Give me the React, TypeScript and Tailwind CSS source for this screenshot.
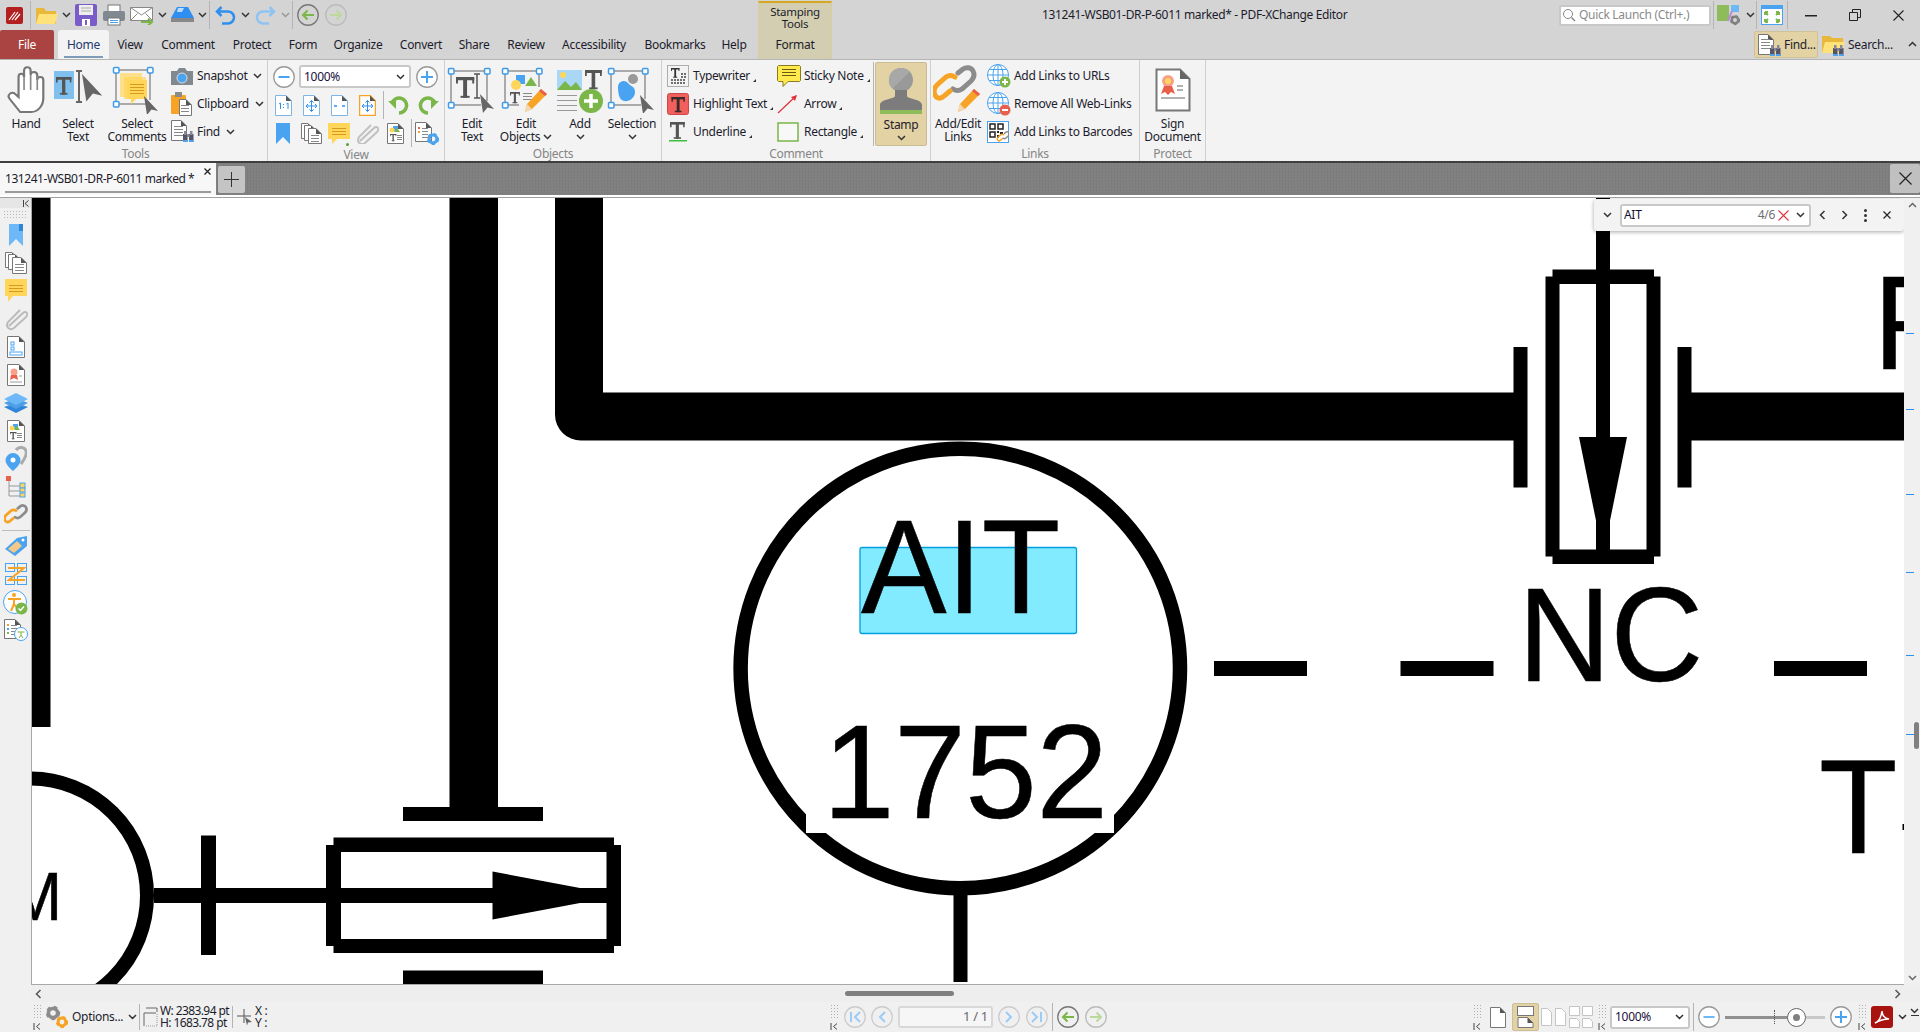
import type { ReactNode } from "react";

const S = ({ w, h, children }: { w: number; h: number; children: ReactNode }) => (
  <svg width={w} height={h} viewBox={`0 0 ${w} ${h}`} fill="none" className="block shrink-0">
    {children}
  </svg>
);

const Chev = ({ up, color = "#333" }: { up?: boolean; color?: string }) => (
  <S w={9} h={6}>
    <path d={up ? "M1 5l3.5-3.5L8 5" : "M1 1l3.5 3.5L8 1"} stroke={color} strokeWidth="1.5" />
  </S>
);

const Corner = () => (
  <svg width="3" height="3" viewBox="0 0 3 3" className="ml-[3px] mt-[9px] shrink-0">
    <path d="M3 0v3H0z" fill="#333" />
  </svg>
);

const Handle = ({ x, y }: { x: number; y: number }) => (
  <rect x={x - 2.5} y={y - 2.5} width="5.5" height="5.5" rx="1" fill="#fff" stroke="#3d9be9" strokeWidth="1.5" />
);

const Cursor = ({ x, y, s = 1 }: { x: number; y: number; s?: number }) => (
  <path transform={`translate(${x} ${y}) scale(${s})`} d="M0 0L14 15 7.5 13.5 3 19z" fill="#666" />
);

const Page = ({ w, h, x = 0, y = 0 }: { w: number; h: number; x?: number; y?: number }) => (
  <g transform={`translate(${x} ${y})`}>
    <path d={`M.5.5H${w - 6}L${w - .5} 6V${h - .5}H.5z`} fill="#fff" stroke="#777" />
    <path d={`M${w - 6} .5L${w - .5} 6H${w - 6}z`} fill="#555" />
  </g>
);

const TBar = ({ x, y, s = 1, c = "#555" }: { x: number; y: number; s?: number; c?: string }) => (
  <g transform={`translate(${x} ${y}) scale(${s})`} fill={c}>
    <rect width="14" height="2.5" />
    <rect x="5.5" width="3" height="16" />
    <rect x="3.5" y="14.5" width="7" height="1.5" />
    <rect y="0" width="1.5" height="5" />
    <rect x="12.5" y="0" width="1.5" height="5" />
  </g>
);

const Lines = ({ x, y, w, n, gap = 3, c = "#888" }: { x: number; y: number; w: number; n: number; gap?: number; c?: string }) => (
  <g fill={c}>
    {Array.from({ length: n }, (_, i) => (
      <rect key={i} x={x} y={y + i * gap} width={w} height="1" />
    ))}
  </g>
);

const Bubble = ({ x, y, w, h, fill = "#ffd659", n = 3 }: { x: number; y: number; w: number; h: number; fill?: string; n?: number }) => (
  <g>
    <path d={`M${x} ${y}h${w}v${h}h${-w + 9}l-5 5v-5h-4z`} fill={fill} />
    <Lines x={x + 3} y={y + 4} w={w - 6} n={n} gap={3} c="#d99a1c" />
  </g>
);

const Binoc = ({ x, y }: { x: number; y: number }) => (
  <g transform={`translate(${x} ${y})`}>
    <rect x="0" y="3" width="4.5" height="8" fill="#556" />
    <rect x="6" y="3" width="4.5" height="8" fill="#556" />
    <rect x="1" y="0" width="2.5" height="4" fill="#889" />
    <rect x="7" y="0" width="2.5" height="4" fill="#889" />
    <rect x="0" y="9" width="4.5" height="2" fill="#4aa3f0" />
    <rect x="6" y="9" width="4.5" height="2" fill="#4aa3f0" />
    <rect x="4" y="3" width="2.5" height="3" fill="#889" />
  </g>
);

const Gear = ({ x, y, r, c }: { x: number; y: number; r: number; c: string }) => (
  <g>
    <circle cx={x} cy={y} r={r * 0.65} stroke={c} strokeWidth={r * 0.5} />
    <circle cx={x} cy={y} r={r * 0.85} stroke={c} strokeWidth={r * 0.35} strokeDasharray={`${r * 0.5} ${r * 0.5}`} />
  </g>
);

const Globe = ({ badge }: { badge: string }) => (
  <S w={24} h={24}>
    <g stroke="#4aa3f0">
      <circle cx="11" cy="11" r="10.5" fill="#fff" />
      <ellipse cx="11" cy="11" rx="5" ry="10.5" />
      <path d="M11 .5v21M.5 11h21M2 5.5h18M2 16.5h18" />
    </g>
    <circle cx="18" cy="18" r="5.5" fill={badge} />
    <rect x="15" y="17" width="6" height="2" fill="#fff" />
    {badge === "#7ab648" && <rect x="17" y="15" width="2" height="6" fill="#fff" />}
  </S>
);

const Pencil = ({ x, y, s = 1 }: { x: number; y: number; s?: number }) => (
  <g transform={`translate(${x} ${y}) scale(${s})`}>
    <path d="M16 0l6 5L7 20 0 23l2-8z" fill="#f7a325" />
    <path d="M16 0l6 5-2 2-6-5z" fill="#e8604c" />
    <path d="M2 15l5 5-7 3z" fill="#f3d9b0" />
  </g>
);

const ChainLink = ({ s = 1 }: { s?: number }) => (
  <g transform={`scale(${s})`} strokeWidth="5" strokeLinecap="round">
    <path d="M25 8l5-4c3-2 8-2 10 2s1 7-2 10l-9 8c-3 2-6 2-9 0" stroke="#8c8c8c" />
    <path d="M17 26l-6 5c-3 3-7 3-9-1s-1-7 2-10l9-8c3-2 6-2 9 0" stroke="#f7a325" />
  </g>
);

const HandIcon = () => (
  <S w={38} h={48}>
    <g transform="scale(1.1 1)">
      <path
        d="M12 46L2.5 33c-3-4 1.500-8 5-5l3 3V11c0-4.500 5-4.500 5 0V5c0-5 6-5 6 0v4c0-4 6-4 6 .5V14c0-4 5.500-4 5.500 0V32c0 8-5 14-11 14z"
        fill="#fff"
        stroke="#777"
        strokeWidth="2"
      />
      <path d="M15.500 11v13M21.500 9v15M27.500 10v14" stroke="#888" strokeWidth="1.500" />
    </g>
  </S>
);

const SelectTextIcon = () => (
  <S w={50} h={40}>
    <rect x="1" y="1" width="20" height="28" fill="#80c0ee" />
    <TBar x={3} y={7} s={1.1} />
    <path d="M23 1h6M26 1v31M23 32h6" stroke="#666" strokeWidth="2" />
    <Cursor x={29} y={4} s={1.45} />
  </S>
);

const SelectCommentsIcon = () => (
  <S w={50} h={48}>
    <path d="M4 4h34M4 4v34" stroke="#aaa" strokeWidth="2" />
    <path d="M38 4v30M4 38h30" stroke="#aaa" strokeWidth="2" />
    <rect x="8" y="7" width="22" height="24" fill="#ffe08a" />
    <rect x="12" y="11" width="22" height="22" fill="#ffd659" opacity=".7" />
    <Bubble x={15} y={14} w={20} h={19} n={4} />
    <Handle x={4} y={4} />
    <Handle x={38} y={4} />
    <Handle x={4} y={38} />
    <Cursor x={32} y={30} s={1} />
  </S>
);

const EditTextIcon = () => (
  <S w={50} h={46}>
    <path d="M4 4h36v30M4 4v34h30" stroke="#aaa" strokeWidth="2" />
    <Handle x={4} y={4} />
    <Handle x={40} y={4} />
    <Handle x={4} y={38} />
    <TBar x={9} y={10} s={1.3} />
    <path d="M27 7h6M30 7v24M27 31h6" stroke="#555" strokeWidth="1.500" />
    <Cursor x={33} y={27} s={1} />
  </S>
);

const EditObjectsIcon = () => (
  <S w={50} h={46}>
    <path d="M4 4h34v16M4 4v34h14" stroke="#aaa" strokeWidth="2" />
    <Handle x={4} y={4} />
    <Handle x={38} y={4} />
    <Handle x={4} y={38} />
    <rect x="15" y="8" width="9" height="9" fill="#4aa3f0" />
    <circle cx="15" cy="18" r="5" fill="#ffd659" />
    <path d="M24 19l6-9 6 9z" fill="#7ab648" />
    <TBar x={9} y={25} s={.7} />
    <Lines x={22} y={26} w={9} n={3} gap={3} />
    <Pencil x={24} y={22} />
  </S>
);

const AddIcon = () => (
  <S w={48} h={46}>
    <rect x="1" y="3" width="25" height="20" fill="#a8d8f5" />
    <path d="M1 23l8-9 6 6 5-5 6 8z" fill="#7ab648" />
    <circle cx="7" cy="8" r="3" fill="#ffd659" />
    <TBar x={29} y={3} s={1.2} />
    <Lines x={1} y={28} w={20} n={4} gap={5} c="#999" />
    <circle cx="35" cy="34" r="12" fill="#7ab648" />
    <path d="M28 34h14M35 27v14" stroke="#fff" strokeWidth="3.500" />
  </S>
);

const SelectionIcon = () => (
  <S w={50} h={46}>
    <path d="M4 4h34v28M4 4v34h30" stroke="#aaa" strokeWidth="2" />
    <Handle x={4} y={4} />
    <Handle x={38} y={4} />
    <Handle x={4} y={38} />
    <circle cx="26" cy="12" r="5" fill="#999" />
    <path d="M11 20c0-6 7-8 10-4s7 3 7 9-6 10-11 9-6-8-6-14z" fill="#4aa3f0" />
    <Cursor x={33} y={28} s={1} />
  </S>
);

const StampIcon = () => (
  <S w={42} h={46}>
    <circle cx="21" cy="12" r="12" fill="#999" />
    <path d="M21 0a12 12 0 0 0-8.500 20.500L30 3.500A12 12 0 0 0 21 0z" fill="#a8a8a8" />
    <path d="M15 22h12v6c0 3 15 3 15 9v5H0v-5c0-6 15-6 15-9z" fill="#7c7c7c" />
    <rect x="0" y="42" width="42" height="4" fill="#8fbc5a" />
  </S>
);

const AddLinksIcon = () => (
  <S w={50} h={50}>
    <ChainLink s={1} />
    <Pencil x={25} y={24} />
  </S>
);

const SignIcon = () => (
  <S w={36} h={44}>
    <path d="M1.500 1.500H25L34.500 11v31.500H1.500z" fill="#fff" stroke="#777" strokeWidth="2" rx="2" />
    <path d="M25 1.500L34.500 11H25z" fill="#666" />
    <circle cx="13" cy="13" r="6" fill="#f7a08c" />
    <circle cx="13" cy="13" r="3" fill="#ffd659" />
    <path d="M9 18l-3 8 4-2 3 3 3-3 4 2-3-8z" fill="#e8604c" />
    <path d="M22 18h6M22 22h6M6 30h24" stroke="#999" strokeWidth="1.500" />
  </S>
);

const Circle = ({ size = 22, line = "#999", fill = "#fff", children }: { size?: number; line?: string; fill?: string; children?: ReactNode }) => (
  <S w={size} h={size}>
    <circle cx={size / 2} cy={size / 2} r={size / 2 - 0.75} fill={fill} stroke={line} strokeWidth="1.300" />
    {children}
  </S>
);

const ArrowCircle = ({ dir, muted }: { dir: "l" | "r"; muted?: boolean }) => (
  <Circle line={muted ? "#bbb" : "#777"} fill="none">
    <path
      d={dir === "l" ? "M17 11H6M10.500 6.500L6 11l4.500 4.500" : "M5 11h11M11.500 6.500L16 11l-4.500 4.500"}
      stroke={muted ? "#bcd99c" : "#7ab648"}
      strokeWidth="2"
    />
  </Circle>
);

const NavCircle = ({ d }: { d: string }) => (
  <Circle line="#ccc" fill="none">
    <path d={d} stroke="#9ccbf5" strokeWidth="2" />
  </Circle>
);

const Sep = ({ className }: { className: string }) => <div className={`w-px shrink-0 bg-[#b4b4b4] ${className}`} />;

const Big = ({ className, icon, lines, chev }: { className: string; icon: ReactNode; lines: string[]; chev?: "inline" | "below" }) => (
  <div className={`flex flex-col items-center shrink-0 ${className}`}>
    <div className="h-[55px] flex items-center justify-center">{icon}</div>
    {lines.map((l, i) => (
      <div key={l} className="leading-[13px] h-[13px] flex items-center gap-[3px] whitespace-nowrap">
        {l}
        {chev === "inline" && i === lines.length - 1 && <Chev />}
      </div>
    ))}
    {chev === "below" && (
      <div className="h-[13px] flex items-center">
        <Chev />
      </div>
    )}
  </div>
);

const Small = ({ icon, label, box, chev, corner, chevGap }: { icon: ReactNode; label: string; box: string; chev?: boolean; corner?: boolean; chevGap?: string }) => (
  <div className="h-[28px] flex items-center whitespace-nowrap">
    <div className={`${box} shrink-0 flex items-center`}>{icon}</div>
    {label}
    {corner && <Corner />}
    {chev && (
      <div className={chevGap}>
        <Chev />
      </div>
    )}
  </div>
);

const Group = ({ label, className, children }: { label: string; className: string; children: ReactNode }) => (
  <div className={`shrink-0 h-full border-r border-[#cfcfcf] flex flex-col pt-[2px] ${className}`}>
    <div className="h-[85px] flex">{children}</div>
    <div className="mt-[1px] h-[14px] leading-[14px] text-center text-[#858585]">{label}</div>
  </div>
);

const Tab = ({ className, label }: { className: string; label: string }) => (
  <div className={`shrink-0 text-center leading-[30px] ${className}`}>{label}</div>
);

const Grip = () => (
  <div className="w-[10px] h-[26px] shrink-0 flex flex-col justify-between">
    <div className="h-[15px] bg-[radial-gradient(#b0b0b0_1px,transparent_1px)] bg-[length:3px_3px]" />
    <S w={8} h={7}>
      <path d="M1 0v7M7 .5L3.500 3.500 7 6.500" stroke="#444" />
    </S>
  </div>
);

const Combo = ({ className, text }: { className: string; text: string }) => (
  <div className={`shrink-0 h-[23px] bg-white border-2 border-[#c8c8c8] rounded-[3px] flex items-center justify-between pl-[3px] pr-[4px] ${className}`}>
    <span className="text-[#1a1040]">{text}</span>
    <Chev />
  </div>
);

const SideIcons: [string, ReactNode][] = [
  ["bookmark", <S w={14} h={22} key="a"><path d="M0 0h14v22L7 15 0 22z" fill="#6db8f7" /><rect x="10" y="0" width="4" height="7" fill="#2f86d8" /></S>],
  ["pages", <S w={22} h={22} key="b"><Page w={13} h={16} /><Page w={13} h={16} x={3} y={2} /><Page w={15} h={17} x={7} y={5} /><Lines x={10} y={12} w={9} n={3} /></S>],
  ["comments", <S w={24} h={24} key="c"><path d="M1 0h22v17H9l-5 6v-6H1z" fill="#ffd659" /><Lines x={5} y={6} w={14} n={3} c="#d99a1c" /></S>],
  ["clip", <S w={24} h={24} key="d"><path d="M5 19L19 6c3-3 6 1 3 4L10 21c-4 3-9-1-6-6L16 3" stroke="#bbb" strokeWidth="2" /></S>],
  ["fields", <S w={18} h={22} key="e"><Page w={18} h={22} /><rect x="4" y="6" width="3" height="3" stroke="#4aa3f0" /><rect x="4" y="11" width="3" height="3" stroke="#4aa3f0" /><rect x="3" y="16" width="12" height="3" stroke="#4aa3f0" /></S>],
  ["certificate", <S w={18} h={22} key="f"><Page w={18} h={22} /><circle cx="7" cy="8" r="3.500" fill="#f7a08c" /><path d="M4 11l-1 5 4-2 4 2-1-5z" fill="#e8604c" /><path d="M12 12h3M3 18h12" stroke="#999" /></S>],
  ["layers", <S w={24} h={20} key="g"><path d="M12 10L24 14 12 20 0 14z" fill="#2f86d8" /><path d="M12 5L24 10 12 16 0 10z" fill="#4a9fe8" /><path d="M12 0L24 6 12 12 0 6z" fill="#6db8f7" /></S>],
  ["content", <S w={18} h={22} key="h"><Page w={18} h={22} /><rect x="6" y="4" width="5" height="5" fill="#4aa3f0" /><circle cx="5" cy="8" r="2.500" fill="#ffd659" /><path d="M7 10l3-4 3 4z" fill="#7ab648" /><TBar x={3} y={12} s={.45} /><Lines x={10} y={13} w={5} n={3} gap={2} /></S>],
  ["places", <S w={22} h={26} key="i"><path d="M11 4c3-4 9-3 10 1 1 3-2 9-5 13" stroke="#aaa" strokeWidth="3" /><path d="M8 7a7.500 7.500 0 0 1 7.500 7.500C15.500 19 8 25 8 25S.5 19 .5 14.500A7.500 7.500 0 0 1 8 7z" fill="#4aa3f0" /><circle cx="8" cy="14" r="2.500" fill="#fff" /></S>],
  ["tree", <S w={20} h={22} key="j"><path d="M3 4v16h12M3 10h12M3 15h12" stroke="#999" /><rect x="0" y="0" width="5" height="5" fill="#e8604c" /><rect x="14" y="7" width="5" height="5" fill="#ffd659" stroke="#4aa3f0" /><rect x="14" y="12" width="5" height="4" fill="#ffd659" stroke="#4aa3f0" /><rect x="14" y="17" width="5" height="4" fill="#ffd659" stroke="#4aa3f0" /></S>],
  ["links", <S w={24} h={22} key="k"><g transform="translate(0 0) scale(.55)"><ChainLink /></g></S>],
  ["sep", <div key="l" className="w-[28px] h-px bg-[#bdbdbd]" />],
  ["tag", <S w={22} h={20} key="m"><path d="M0 13L12 2 22 0v10L10 20z" fill="#4aa3f0" /><path d="M3 13l9-8 5 5-8 7z" fill="#f3c98a" /><circle cx="18" cy="4" r="1.500" fill="#fff" /></S>],
  ["order", <S w={22} h={22} key="n"><g stroke="#4aa3f0"><rect x=".5" y=".5" width="9" height="8" /><rect x="12.500" y=".5" width="9" height="8" /><rect x=".5" y="13.500" width="9" height="8" /><rect x="12.500" y="13.500" width="9" height="8" /></g><path d="M3 5h16L4 17h16" stroke="#f7a325" strokeWidth="2" /></S>],
  ["access", <S w={25} h={25} key="o"><circle cx="12" cy="12" r="11.500" fill="#fff" stroke="#4aa3f0" /><circle cx="11" cy="5" r="2" fill="#f7a325" /><path d="M5 9h13M11 9v5l-3 7M11 14l3 4" stroke="#f7a325" strokeWidth="2" /><circle cx="18.500" cy="18.500" r="6" fill="#7ab648" /><path d="M15.500 18.500l2 2 3.500-4" stroke="#fff" strokeWidth="1.500" /></S>],
  ["check", <S w={24} h={22} key="p"><Page w={17} h={20} /><Lines x={7} y={6} w={6} n={4} /><g fill="#e8a33d"><rect x="3" y="5" width="2" height="2" /></g><rect x="3" y="9" width="2" height="2" fill="#4aa3f0" /><rect x="3" y="13" width="2" height="2" fill="#7ab648" /><circle cx="17" cy="15" r="6.500" fill="#fff" stroke="#4aa3f0" /><path d="M13.500 13h7M17 13v3l-2 3M17 16l2 3" stroke="#7ab648" /></S>],
];

// page text: stretched a little because Liberation's capitals are shorter than Arial's
const PdfText = ({ x, y, size = 128.5, children }: { x: number; y: number; size?: number; children: string }) => (
  <text transform={`translate(${x} ${y}) scale(1 1.045)`} fontSize={size} fill="#000" stroke="#000" strokeWidth=".5">
    {children}
  </text>
);

// the page content, in screen coordinates
const Drawing = () => (
  <svg width="1873" height="787" viewBox="31 198 1873 787" className="block font-['Liberation_Sans',sans-serif]">
    <rect x="31" y="198" width="1873" height="787" fill="#fff" />
    <g fill="#000">
      <rect x="31" y="198" width="19.500" height="529" />
      <rect x="449.500" y="198" width="48.500" height="609" />
      <rect x="403" y="807" width="140" height="14" />
      <rect x="403" y="970.500" width="140" height="15" />
      <rect x="333.500" y="837.500" width="280.500" height="14.500" />
      <rect x="333.500" y="939" width="280.500" height="14" />
      <rect x="326" y="845" width="15" height="101" />
      <rect x="606.500" y="845" width="14.500" height="101" />
      <rect x="154" y="888" width="456" height="15" />
      <rect x="201" y="835.500" width="15" height="119.500" />
      <path d="M492.500 871.500V919.500L620 895.500z" />
      <path d="M555 198H603V392.500H1514V440.500H581A26 26 0 0 1 555 414.500z" />
      <rect x="1691" y="392.500" width="213" height="48" />
      <rect x="1513.500" y="347" width="14" height="140.500" />
      <rect x="1677.500" y="347" width="14" height="140.500" />
      <rect x="1552.500" y="269.500" width="101.500" height="14.500" />
      <rect x="1552.500" y="549.500" width="101.500" height="14.500" />
      <rect x="1545.500" y="276.500" width="14" height="280" />
      <rect x="1646.500" y="276.500" width="14" height="280" />
      <rect x="1596" y="198" width="14" height="366" />
      <path d="M1579 437H1627L1603 555z" />
      <rect x="953.500" y="890" width="14" height="92" />
      <rect x="1214" y="661" width="93" height="15" />
      <rect x="1400.500" y="661" width="93" height="15" />
      <rect x="1774" y="661" width="93" height="15" />
      <rect x="1902.500" y="824" width="1.500" height="6" />
    </g>
    <circle cx="30" cy="895.500" r="117" fill="none" stroke="#000" strokeWidth="14" />
    <circle cx="960.300" cy="668.500" r="219.700" fill="#fff" stroke="#000" strokeWidth="14.500" />
    <rect x="806" y="730" width="308" height="103" fill="#fff" />
    <rect x="860" y="547.500" width="216.500" height="86" rx="2" fill="#82ebff" stroke="#00a0e0" strokeWidth="1.300" />
    <PdfText x={861} y={612.8}>AIT</PdfText>
    <PdfText x={823} y={818}>1752</PdfText>
    <PdfText x={1518} y={680.5}>NC</PdfText>
    <PdfText x={1819} y={853}>T</PdfText>
    <PdfText x={1873} y={368.5}>R</PdfText>
    <PdfText x={8} y={919.5} size={65}>M</PdfText>
  </svg>
);

export default function App() {
  return (
    <div className="w-[1920px] h-[1032px] overflow-hidden flex flex-col bg-[#f0f0f0] text-[12px] text-[#1c1c2c] font-['Noto_Sans',sans-serif] tracking-[-0.3px]">
      {/* title bar */}
      <div className="h-[30px] shrink-0 flex items-center bg-[#d4d4d4]">
        <div className="w-[758px] shrink-0 flex items-center h-full">
          <div className="ml-[6px] w-[17px] h-[17px] rounded-[2px] bg-[#b3201f] flex items-center justify-center">
            <S w={13} h={11}>
              <path d="M1 10L7 2M4 10L10 2M7 10L12 4" stroke="#fff" strokeWidth="1.200" />
            </S>
          </div>
          <Sep className="h-[28px] ml-[7px]" />
          <div className="ml-[4px]">
            <S w={24} h={20}>
              <path d="M1 3h8l2 3h10v13H1z" fill="#e9b83a" />
              <path d="M4 9h19l-3 10H1z" fill="#ffe27a" />
            </S>
          </div>
          <div className="ml-[3px]"><Chev /></div>
          <div className="ml-[4px]">
            <S w={22} h={22}>
              <rect x="0" y="0" width="22" height="22" rx="2" fill="#7a5cc8" />
              <rect x="4" y="1" width="14" height="10" fill="#eee" />
              <path d="M6 4h10M6 7h10" stroke="#aaa" />
              <rect x="7" y="15" width="8" height="7" fill="#fff" />
              <rect x="10" y="16" width="2" height="5" fill="#7a5cc8" />
            </S>
          </div>
          <div className="ml-[6px]">
            <S w={22} h={22}>
              <rect x="5" y="1" width="12" height="7" fill="#fff" stroke="#777" />
              <rect x="0" y="7" width="22" height="10" rx="2" fill="#808890" />
              <rect x="5" y="14" width="12" height="7" fill="#fff" stroke="#777" />
              <rect x="7" y="16" width="8" height="1" fill="#4aa3f0" />
              <rect x="7" y="18" width="8" height="1" fill="#4aa3f0" />
            </S>
          </div>
          <div className="ml-[5px]">
            <S w={24} h={20}>
              <path d="M.5 2.500h22v13H.5z" fill="#fff" stroke="#888" />
              <path d="M.5 2.500L11.500 10l11-7.500M.5 15.500l7-7M22.500 15.500l-7-7" stroke="#888" />
              <path d="M11 17h10M18 13.500L22 17l-4 3.500" stroke="#7ab648" strokeWidth="2" />
            </S>
          </div>
          <div className="ml-[4px]"><Chev /></div>
          <div className="ml-[3px]">
            <S w={25} h={16}>
              <path d="M7 0h11l6 11H1z" fill="#2f8ff0" />
              <path d="M8 1h6l-2 4H7z" fill="#bcdcfa" />
              <rect x="1" y="11" width="23" height="4" fill="#888" />
            </S>
          </div>
          <div className="ml-[3px]"><Chev /></div>
          <Sep className="h-[28px] ml-[2px]" />
          <div className="ml-[5px]">
            <S w={21} h={19}>
              <path d="M6.500 1L2 5.500 6.500 10M2.500 5.500H13a6 6 0 0 1 0 12H7" stroke="#2f8ff0" strokeWidth="2.500" />
            </S>
          </div>
          <div className="ml-[5px]"><Chev /></div>
          <div className="ml-[5px]">
            <S w={21} h={19}>
              <path d="M14.500 1L19 5.500 14.500 10M18.500 5.500H8a6 6 0 0 0 0 12h6" stroke="#8fc4f2" strokeWidth="2.500" />
            </S>
          </div>
          <div className="ml-[5px]"><Chev color="#999" /></div>
          <Sep className="h-[28px] ml-[2px]" />
          <div className="ml-[4px]"><ArrowCircle dir="l" /></div>
          <div className="ml-[6px]"><ArrowCircle dir="r" muted /></div>
        </div>
        <div className="w-[74px] shrink-0 self-stretch mt-[1px] bg-[#d3ceb1] border-t-2 border-x border-t-[#d4a820] border-x-[#d6ce9c] text-center leading-[12px] pt-[3px] text-[11.500px]">
          Stamping
          <br />
          Tools
        </div>
        <div className="ml-[210px] w-[320px] shrink-0 whitespace-nowrap tracking-[-0.35px]">131241-WSB01-DR-P-6011 marked* - PDF-XChange Editor</div>
        <div className="ml-[197px] w-[152px] h-[21px] shrink-0 bg-white border-2 border-[#c8c8c8] rounded-[2px] flex items-center pl-[1px] text-[#8a8a8a]">
          <S w={14} h={14}>
            <circle cx="6" cy="6" r="4.500" stroke="#888" />
            <path d="M9.500 9.500L13 13" stroke="#888" strokeWidth="1.500" />
          </S>
          <span className="ml-[3px]">Quick Launch (Ctrl+.)</span>
        </div>
        <Sep className="h-[28px] ml-[2px]" />
        <div className="ml-[3px]">
          <S w={24} h={22}>
            <rect x="0" y="1" width="12" height="16" fill="#8fbc5a" />
            <rect x="14" y="1" width="8" height="7" fill="#6db8f7" />
            <path d="M11 17l4-10" stroke="#b78ad8" strokeWidth="2" />
            <Gear x={18} y={16} r={5} c="#808080" />
          </S>
        </div>
        <div className="ml-[5px]"><Chev /></div>
        <Sep className="h-[28px] ml-[1px]" />
        <div className="ml-[4px]">
          <S w={22} h={20}>
            <rect x=".5" y=".5" width="21" height="19" fill="#fff" stroke="#4aa3f0" />
            <rect x="1" y="1" width="20" height="3" fill="#4aa3f0" />
            <path d="M4 7l3 3M4 7v3M4 7h3M18 7l-3 3M18 7v3M18 7h-3M4 17l3-3M4 17v-3M4 17h3M18 17l-3-3M18 17v-3M18 17h-3" stroke="#7ab648" strokeWidth="2" />
          </S>
        </div>
        <Sep className="h-[28px] ml-[4px]" />
        <div className="ml-[17px]">
          <S w={12} h={3}><rect y="1" width="12" height="1.500" fill="#222" /></S>
        </div>
        <div className="ml-[32px]">
          <S w={12} h={12}>
            <path d="M.5 3.500h8v8h-8zM3.500 3.500v-3h8v8h-3" stroke="#222" />
          </S>
        </div>
        <div className="ml-[32px]">
          <S w={11} h={11}><path d="M.5.5l10 10M10.500.5l-10 10" stroke="#222" strokeWidth="1.100" /></S>
        </div>
      </div>

      {/* ribbon tabs */}
      <div className="h-[30px] shrink-0 flex bg-[#d4d4d4] border-b border-[#b5b5b5]">
        <div className="w-[54px] shrink-0 bg-[#a94442] text-white text-center leading-[30px] rounded-t-[2px]">File</div>
        <div className="ml-[4px] w-[51px] shrink-0 bg-[#f3f3f3] text-center leading-[30px] rounded-t-[3px] text-[#1c3a6e] relative">
          Home
          <div className="h-[2px] mx-[6px] -mt-[4px] bg-[#7f9db9]" />
        </div>
        <Tab className="w-[42px]" label="View" />
        <Tab className="w-[74px]" label="Comment" />
        <Tab className="w-[54px]" label="Protect" />
        <Tab className="w-[48px]" label="Form" />
        <Tab className="w-[62px]" label="Organize" />
        <Tab className="w-[64px]" label="Convert" />
        <Tab className="w-[42px]" label="Share" />
        <Tab className="w-[62px]" label="Review" />
        <Tab className="w-[74px]" label="Accessibility" />
        <Tab className="w-[88px]" label="Bookmarks" />
        <Tab className="w-[30px]" label="Help" />
        <Tab className="ml-[9px] w-[74px] bg-[#d3ceb1] border-x border-[#d6ce9c]" label="Format" />
        <div className="ml-[922px] mt-[1px] w-[64px] h-[27px] shrink-0 bg-[#e3d2a4] border border-[#cfc298] rounded-[2px] flex items-center pl-[2px]">
          <S w={26} h={24}>
            <Page w={16} h={21} x={1} y={1} />
            <Lines x={4} y={6} w={9} n={4} />
            <Binoc x={13} y={12} />
          </S>
          <span className="ml-[1px]">Find...</span>
        </div>
        <div className="ml-[3px] mt-[1px] flex items-center h-[27px]">
          <S w={26} h={24}>
            <path d="M1 3h8l2 2h11v15H1z" fill="#e9b83a" />
            <path d="M4 9h20l-4 11H1z" fill="#ffe27a" />
            <Binoc x={12} y={12} />
          </S>
          <span className="ml-[1px]">Search...</span>
        </div>
        <div className="ml-[15px] mt-[11px]"><Chev up /></div>
      </div>

      {/* ribbon */}
      <div className="h-[103px] shrink-0 flex bg-[#f3f3f3] border-b-2 border-[#3f3f3f]">
        <Group label="Tools" className="w-[268px] pl-[4px]">
          <Big className="w-[44px]" icon={<HandIcon />} lines={["Hand"]} />
          <Big className="w-[60px]" icon={<SelectTextIcon />} lines={["Select", "Text"]} />
          <Big className="w-[58px]" icon={<SelectCommentsIcon />} lines={["Select", "Comments"]} />
          <div className="ml-[5px]">
            <Small
              box="w-[26px]"
              label="Snapshot"
              chev
              chevGap="ml-[6px]"
              icon={
                <S w={22} h={18}>
                  <path d="M0 4h6l2-3h6l2 3h6v14H0z" fill="#808890" />
                  <circle cx="11" cy="11" r="5" fill="#4aa3f0" stroke="#ddd" />
                </S>
              }
            />
            <Small
              box="w-[26px]"
              label="Clipboard"
              chev
              chevGap="ml-[6px]"
              icon={
                <S w={22} h={24}>
                  <rect x="0" y="3" width="15" height="19" rx="1" fill="#f7a325" />
                  <rect x="4" y="0" width="7" height="5" fill="#8c8c8c" />
                  <Page w={13} h={17} x={8} y={7} />
                  <Lines x={10} y={13} w={8} n={3} />
                </S>
              }
            />
            <Small
              box="w-[26px]"
              label="Find"
              chev
              chevGap="ml-[6px]"
              icon={
                <S w={24} h={24}>
                  <Page w={16} h={21} />
                  <Lines x={3} y={6} w={9} n={4} />
                  <Binoc x={12} y={11} />
                </S>
              }
            />
          </div>
        </Group>

        <Group label="View" className="w-[177px]">
          <div className="pl-[1px]">
            <div className="h-[29px] flex items-center">
              <div className="w-[30px] flex justify-center">
                <Circle><rect x="5.500" y="10" width="11" height="2" fill="#4aa3f0" /></Circle>
              </div>
              <Combo className="w-[112px]" text="1000%" />
              <div className="w-[32px] flex justify-center">
                <Circle><path d="M5 11h12M11 5v12" stroke="#4aa3f0" strokeWidth="2" /></Circle>
              </div>
            </div>
            <div className="h-[28px] flex items-center">
              {["1:1", "m", "w", "f"].map((k) => (
                <div key={k} className="w-[28px] flex justify-center">
                  <S w={17} h={21}>
                    <path d="M.5.5H11L16.500 6v14.500H.5z" fill="#fff" stroke={k === "f" ? "#f7a325" : "#7fb4e6"} strokeWidth={k === "f" ? 1.500 : 1} />
                    <path d="M11 .5L16.500 6H11z" fill="#555" />
                    {k === "1:1" ? (
                      <path d="M4 9l1.500-1v6M8.500 9v1M8.500 12v1M11.500 9l1.500-1v6" stroke="#2f8ff0" />
                    ) : k === "w" ? (
                      <path d="M3 11h3M11 11h3" stroke="#2f8ff0" strokeWidth="1.500" />
                    ) : (
                      <path d="M8.500 5.500v11M3 11h11M6.500 7.500l2-2 2 2M6.500 14.500l2 2 2-2M5 9l-2 2 2 2M12 9l2 2-2 2" stroke="#2f8ff0" />
                    )}
                  </S>
                </div>
              ))}
              <Sep className="h-[28px] ml-[2px]" />
              {[0, 1].map((i) => (
                <div key={i} className="w-[29px] flex justify-center">
                  <S w={22} h={19}>
                    <path d={i === 0 ? "M11 17a7.500 7.500 0 1 0-7-10" : "M11 17a7.500 7.500 0 1 1 7-10"} stroke="#7ab648" strokeWidth="3.500" />
                    <path d={i === 0 ? "M0 5h8v8z" : "M22 5h-8v8z"} fill="#7ab648" />
                  </S>
                </div>
              ))}
            </div>
            <div className="h-[28px] flex items-center">
              <div className="w-[28px] flex justify-center">
                <S w={14} h={21}><path d="M0 0h14v21L7 14 0 21z" fill="#4aa3f0" /></S>
              </div>
              <div className="w-[28px] flex justify-center">
                <S w={21} h={21}><Page w={13} h={16} /><Page w={13} h={16} x={3} y={2} /><Page w={14} h={16} x={7} y={5} /><Lines x={10} y={12} w={8} n={3} /></S>
              </div>
              <div className="w-[28px] flex justify-center relative">
                <S w={22} h={21}><path d="M0 0h22v16H9l-5 5v-5H0z" fill="#ffd659" /><Lines x={4} y={5} w={14} n={3} c="#d99a1c" /></S>
                <div className="absolute right-[4px] -bottom-[2px] w-[3px] h-[3px] rounded-full bg-[#5a9e2f]" />
              </div>
              <div className="w-[28px] flex justify-center">
                <S w={24} h={22}><path d="M5 19L19 6c3-3 6 1 3 4L10 21c-4 3-9-1-6-6L16 3" stroke="#c0c0c0" strokeWidth="2" /></S>
              </div>
              <div className="w-[28px] flex justify-center">
                <S w={17} h={21}>
                  <Page w={17} h={21} />
                  <rect x="6" y="3" width="5" height="5" fill="#4aa3f0" />
                  <circle cx="5" cy="7" r="2.500" fill="#ffd659" />
                  <path d="M7 9l3-4 3 4z" fill="#7ab648" />
                  <TBar x={3} y={11} s={.45} />
                  <Lines x={10} y={12} w={5} n={3} gap={2} />
                </S>
              </div>
              <Sep className="h-[28px] ml-[2px]" />
              <div className="w-[29px] flex justify-center">
                <S w={24} h={23}>
                  <Page w={17} h={20} />
                  <Lines x={7} y={6} w={6} n={4} />
                  <rect x="3" y="5" width="2" height="2" fill="#e8604c" />
                  <rect x="3" y="9" width="2" height="2" fill="#e8a33d" />
                  <Gear x={18} y={17} r={6} c="#4aa3f0" />
                </S>
              </div>
            </div>
          </div>
        </Group>

        <Group label="Objects" className="w-[217px]">
          <Big className="w-[54px]" icon={<EditTextIcon />} lines={["Edit", "Text"]} />
          <Big className="w-[54px]" icon={<EditObjectsIcon />} lines={["Edit", "Objects"]} chev="inline" />
          <Big className="w-[54px]" icon={<AddIcon />} lines={["Add"]} chev="below" />
          <Big className="w-[50px]" icon={<SelectionIcon />} lines={["Selection"]} chev="below" />
        </Group>

        <Group label="Comment" className="w-[269px]">
          <div className="ml-[5px] w-[110px] shrink-0">
            <Small
              box="w-[26px]"
              label="Typewriter"
              corner
              icon={
                <S w={22} h={22}>
                  <rect x=".5" y=".5" width="21" height="21" stroke="#666" strokeDasharray="1 1" />
                  <TBar x={4} y={3} s={.6} c="#333" />
                  <path d="M14 9h5M14 12h5M4 15h14M4 18h14" stroke="#444" strokeWidth="1.500" strokeDasharray="2 1" />
                </S>
              }
            />
            <Small
              box="w-[26px]"
              label="Highlight Text"
              corner
              icon={
                <S w={22} h={22}>
                  <rect x=".5" y=".5" width="21" height="21" rx="2" fill="#f25f5c" stroke="#c94a48" />
                  <TBar x={4.500} y={4} s={.95} c="#3a2a2a" />
                </S>
              }
            />
            <Small
              box="w-[26px]"
              label="Underline"
              corner
              icon={
                <S w={22} h={22}>
                  <TBar x={3} y={1} s={1.050} />
                  <rect x="2" y="19" width="18" height="1.500" fill="#3fbf3f" />
                </S>
              }
            />
          </div>
          <div className="w-[96px] shrink-0">
            <Small
              box="w-[27px]"
              label="Sticky Note"
              corner
              icon={
                <S w={24} h={22}>
                  <path d="M1.500.5h21l1 1v14l-1 1H11l-5 5v-5H1.500l-1-1v-14z" fill="#ffe94d" stroke="#8a7a20" />
                  <Lines x={5} y={4} w={14} n={3} c="#6a5a10" />
                </S>
              }
            />
            <Small
              box="w-[27px]"
              label="Arrow"
              corner
              icon={
                <S w={22} h={20}>
                  <path d="M1 19L19 2" stroke="#e0333a" strokeWidth="1.200" />
                  <path d="M20 1l-6 2 4 4z" fill="#e0333a" />
                </S>
              }
            />
            <Small
              box="w-[27px]"
              label="Rectangle"
              corner
              icon={
                <S w={22} h={20}>
                  <rect x="1" y="1" width="20" height="18" stroke="#7ab648" strokeWidth="1.500" fill="#f8f8f8" />
                </S>
              }
            />
          </div>
          <Sep className="h-[84px]" />
          <div className="ml-[1px] w-[52px] h-[84px] bg-[#e3d2a4] border border-[#c8bb95] rounded-[2px]">
            <Big className="w-full" icon={<StampIcon />} lines={["Stamp"]} chev="below" />
          </div>
        </Group>

        <Group label="Links" className="w-[209px]">
          <Big className="w-[54px]" icon={<AddLinksIcon />} lines={["Add/Edit", "Links"]} />
          <div className="ml-[2px]">
            <Small box="w-[27px]" label="Add Links to URLs" icon={<Globe badge="#7ab648" />} />
            <Small box="w-[27px]" label="Remove All Web-Links" icon={<Globe badge="#e8604c" />} />
            <Small
              box="w-[27px]"
              label="Add Links to Barcodes"
              icon={
                <S w={22} h={22}>
                  <rect x=".5" y=".5" width="21" height="21" fill="#fff" stroke="#4aa3f0" />
                  <path d="M3 3h5v5H3zM11 3h5v5h-5zM3 11h5v5H3z" stroke="#222" strokeWidth="1.500" />
                  <path d="M10 10h2v2h-2zM13 11h3v2h-3zM10 14h2v3h-2z" fill="#222" />
                  <g transform="translate(10 10) scale(.3)"><ChainLink /></g>
                </S>
              }
            />
          </div>
        </Group>

        <Group label="Protect" className="w-[66px]">
          <Big className="w-[65px]" icon={<SignIcon />} lines={["Sign", "Document"]} />
        </Group>
      </div>

      {/* document tabs */}
      <div className="h-[32px] shrink-0 flex bg-[repeating-conic-gradient(#7c7c7c_0_25%,#838383_0_50%)] bg-[length:3px_3px]">
        <div className="w-[216px] shrink-0 bg-[#f7f7f7] relative whitespace-nowrap pl-[5px] pt-[8px] leading-[16px] tracking-[-0.45px]">
          131241-WSB01-DR-P-6011 marked *
          <div className="absolute left-[5px] bottom-[2px] w-[206px] h-[2px] bg-[#9a9a9a]" />
          <div className="absolute right-[5px] top-[5px]">
            <S w={7} h={7}><path d="M.5.5l6 6M6.500.5l-6 6" stroke="#222" strokeWidth="1.300" /></S>
          </div>
        </div>
        <div className="ml-[2px] mt-[3px] w-[27px] h-[27px] shrink-0 bg-[#c4c4c4] rounded-[2px] flex items-center justify-center">
          <S w={15} h={15}><path d="M7.500 0v15M0 7.500h15" stroke="#333" /></S>
        </div>
        <div className="ml-auto mt-[1px] w-[30px] h-[29px] bg-[#c0c0c0] rounded-[2px] flex items-center justify-center">
          <S w={13} h={13}><path d="M.5.5l12 12M12.500.5l-12 12" stroke="#222" strokeWidth="1.200" /></S>
        </div>
      </div>
      <div className="h-[2px] shrink-0 bg-white" />
      <div className="h-px shrink-0 bg-[#a0a0a0]" />

      {/* workspace */}
      <div className="flex-1 min-h-0 flex">
        <div className="w-[31px] shrink-0 flex flex-col bg-[#f0f0f0]">
          <div className="h-[10px] bg-[#e6e6e6] flex justify-end items-center pr-[2px]">
            <S w={6} h={7}><path d="M.5 0v7M5.500.5L2 3.500l3.500 3" stroke="#444" /></S>
          </div>
          <div className="h-[9px] mt-[2px] mx-[3px] bg-[radial-gradient(#b8b8b8_1px,transparent_1px)] bg-[length:3px_3px]" />
          <div className="mt-[2px] flex flex-col items-center">
            {SideIcons.map(([name, icon]) =>
              name === "sep" ? (
                <div key={name} className="h-[3px] flex items-center">{icon}</div>
              ) : (
                <div key={name} className="h-[28px] flex items-center justify-center">{icon}</div>
              )
            )}
          </div>
        </div>

        <div className="flex-1 min-w-0 flex flex-col">
          <div className="flex-1 min-h-0 flex">
            <div className="relative w-[1873px] h-[787px] shrink-0 overflow-hidden">
              <Drawing />
              <div className="absolute inset-0 border-l border-b border-[#a8a8a8] pointer-events-none" />
              <div className="absolute right-0 top-[1px] w-[310px] h-[32px] bg-[#f3f3f3] rounded-[3px] shadow-[0_1px_4px_rgba(0,0,0,0.35)] flex items-center">
                <div className="w-[26px] flex justify-center"><Chev /></div>
                <div className="w-[191px] h-[23px] bg-white border-2 border-[#c8c8c8] rounded-[3px] flex items-center pl-[2px] text-[#101030]">
                  <span>AIT</span>
                  <span className="ml-auto text-[#6f6f6f]">4/6</span>
                  <div className="ml-[3px]">
                    <S w={11} h={11}><path d="M.5.5l10 10M10.500.5l-10 10" stroke="#d8383f" strokeWidth="1.100" /></S>
                  </div>
                  <div className="ml-[7px] mr-[4px]"><Chev /></div>
                </div>
                <div className="ml-[8px] w-[7px]">
                  <S w={7} h={10}><path d="M5.500 1L1.500 5l4 4" stroke="#333" strokeWidth="1.500" /></S>
                </div>
                <div className="ml-[15px] w-[7px]">
                  <S w={7} h={10}><path d="M1.500 1l4 4-4 4" stroke="#333" strokeWidth="1.500" /></S>
                </div>
                <div className="ml-[16px] flex flex-col gap-[2px]">
                  <div className="w-[3px] h-[3px] bg-[#333] rounded-full" />
                  <div className="w-[3px] h-[3px] bg-[#333] rounded-full" />
                  <div className="w-[3px] h-[3px] bg-[#333] rounded-full" />
                </div>
                <div className="ml-[16px]">
                  <S w={8} h={8}><path d="M.5.5l7 7M7.500.5l-7 7" stroke="#222" strokeWidth="1.200" /></S>
                </div>
              </div>
            </div>
            <div className="relative w-[16px] shrink-0 bg-[#f0f0f0] flex flex-col items-center justify-between py-[4px]">
              <Chev up color="#666" />
              <Chev color="#666" />
              <div className="absolute left-[2px] top-[135px] w-[8px] h-px bg-[#2f8ff0]" />
              <div className="absolute left-[2px] top-[211px] w-[8px] h-px bg-[#2f8ff0]" />
              <div className="absolute left-[2px] top-[296px] w-[8px] h-px bg-[#2f8ff0]" />
              <div className="absolute left-[2px] top-[374px] w-[8px] h-px bg-[#2f8ff0]" />
              <div className="absolute left-[2px] top-[457px] w-[8px] h-px bg-[#2f8ff0]" />
              <div className="absolute left-[2px] top-[536px] w-[8px] h-px bg-[#2f8ff0]" />
              <div className="absolute right-[1px] top-[524px] w-[5px] h-[27px] rounded-full bg-[#808080]" />
            </div>
          </div>
          <div className="h-[17px] shrink-0 relative bg-[#eeeeee] flex items-center justify-between pl-[4px] pr-[19px]">
            <S w={7} h={10}><path d="M5.500 1L1.500 5l4 4" stroke="#555" strokeWidth="1.500" /></S>
            <S w={7} h={10}><path d="M1.500 1l4 4-4 4" stroke="#555" strokeWidth="1.500" /></S>
            <div className="absolute left-[814px] top-[6px] w-[109px] h-[5px] rounded-full bg-[#808080]" />
          </div>
        </div>
      </div>

      {/* status bar */}
      <div className="h-[30px] shrink-0 flex items-center bg-[#f0f0f0]">
        <div className="ml-[33px]"><Grip /></div>
        <div className="ml-[2px]">
          <S w={24} h={24}>
            <Gear x={8} y={8} r={7} c="#8c8c8c" />
            <Gear x={17} y={17} r={6} c="#f7a325" />
          </S>
        </div>
        <span className="ml-[3px] w-[52px] shrink-0 whitespace-nowrap">Options...</span>
        <div className="ml-[4px]"><Chev /></div>
        <Sep className="h-[26px] ml-[2px]" />
        <div className="ml-[3px]">
          <S w={16} h={20}>
            <path d="M3 1h11M14 1v4M1 19V6M1 6h12" stroke="#666" />
            <path d="M3 19h11v-12" stroke="#999" strokeDasharray="1 1" />
          </S>
        </div>
        <div className="ml-[1px] w-[71px] shrink-0 leading-[12px] whitespace-nowrap tracking-[-0.6px]">
          W: 2383.94 pt
          <br />
          H: 1683.78 pt
        </div>
        <Sep className="h-[22px] ml-[1px]" />
        <div className="ml-[4px]">
          <S w={16} h={18}>
            <path d="M7 1v14M0 8h14" stroke="#555" />
            <path d="M8 9l7 5-4 .5-1 3z" fill="#666" />
          </S>
        </div>
        <div className="ml-[2px] w-[20px] shrink-0 leading-[12px] whitespace-nowrap">
          X :
          <br />
          Y :
        </div>

        <div className="ml-[555px]"><Grip /></div>
        <div className="ml-[4px]"><NavCircle d="M7 6v10M16 6l-5 5 5 5" /></div>
        <div className="ml-[5px]"><NavCircle d="M14 6l-5 5 5 5" /></div>
        <div className="ml-[5px] w-[95px] h-[22px] shrink-0 border-2 border-[#d8d8d8] rounded-[3px] bg-[#f6f6f6] flex items-center justify-end pr-[3px] text-[#6a6a6a] text-[13px]">
          1 / 1
        </div>
        <div className="ml-[5px]"><NavCircle d="M8 6l5 5-5 5" /></div>
        <div className="ml-[6px]"><NavCircle d="M6 6l5 5-5 5M15 6v10" /></div>
        <Sep className="h-[28px] ml-[4px]" />
        <div className="ml-[4px]"><ArrowCircle dir="l" /></div>
        <div className="ml-[6px]"><ArrowCircle dir="r" muted /></div>

        <div className="ml-[366px]"><Grip /></div>
        <div className="ml-[7px]">
          <S w={16} h={21}><Page w={16} h={21} /></S>
        </div>
        <div className="ml-[6px] w-[27px] h-[28px] shrink-0 bg-[#e3d2a4] border border-[#cdbf95] rounded-[2px] flex items-center justify-center">
          <S w={17} h={22}>
            <rect x=".5" y=".5" width="16" height="9" fill="#fff" stroke="#777" />
            <Page w={16} h={11} x={.5} y={11} />
          </S>
        </div>
        <div className="ml-[2px]">
          <S w={25} h={18}>
            <path d="M.5.5h6l4 4v13H.5zM14.500.5h6l4 4v13h-10z" fill="#fff" stroke="#c4c4c4" />
          </S>
        </div>
        <div className="ml-[3px]">
          <S w={24} h={22}>
            <path d="M.5.5h10v9H.5zM13.500.5h10v9h-10zM.5 12.500h7l3 3v6H.5zM13.500 12.500h7l3 3v6h-10z" fill="#fff" stroke="#c4c4c4" />
          </S>
        </div>
        <div className="ml-[5px]"><Grip /></div>
        <Combo className="ml-[2px] w-[80px]" text="1000%" />
        <Sep className="h-[28px] ml-[3px]" />
        <div className="ml-[4px]">
          <Circle line="#999"><rect x="5.500" y="10" width="11" height="2" fill="#6db8f7" /></Circle>
        </div>
        <div className="ml-[5px] w-[100px] h-[18px] shrink-0 relative">
          <div className="absolute left-0 top-[8px] w-[65px] h-[3px] bg-[#909090]" />
          <div className="absolute left-[65px] top-[8px] w-[35px] h-[3px] bg-[#c8c8c8]" />
          <div className="absolute left-[49px] top-[2px] w-px h-[14px] border-l border-dotted border-[#555]" />
          <div className="absolute left-[62px] top-0 w-[19px] h-[19px] rounded-full bg-white border border-[#666] flex items-center justify-center">
            <div className="w-[7px] h-[7px] rounded-full bg-[#808080]" />
          </div>
        </div>
        <div className="ml-[5px]">
          <Circle line="#999"><path d="M5 11h12M11 5v12" stroke="#4aa3f0" strokeWidth="2" /></Circle>
        </div>
        <div className="ml-[6px]"><Grip /></div>
        <div className="ml-[3px] w-[22px] h-[22px] shrink-0 rounded-[3px] bg-[#a8120f] flex items-center justify-center">
          <S w={16} h={16}>
            <path d="M1 14c3-1 6-5 7-12 0 4 2 7 7 8-4 0-9 1-14 4z" stroke="#fff" strokeWidth="1.500" />
          </S>
        </div>
        <div className="ml-[5px]"><Chev /></div>
        <div className="ml-[3px] -mt-[10px] flex flex-col items-center gap-[1px]">
          <Chev />
          <div className="w-[8px] h-px bg-[#333]" />
        </div>
      </div>
    </div>
  );
}
